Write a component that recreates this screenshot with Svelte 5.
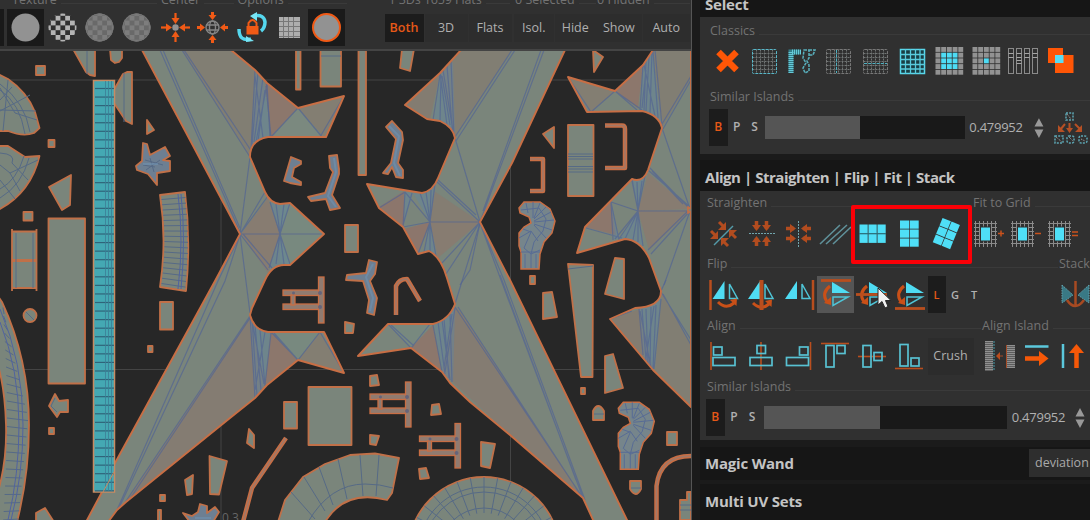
<script>
  const range = (n) => Array.from({ length: n }, (_, i) => i);

  const slateFill = '#7a857b';
  const facets = [
    ['#827c72', '182,50 230,50 255,70 268,84 250,157'],
    ['#8f746a', '265,82 298,108 271,137'],
    ['#7b8980', '298,108 271,137 322,137'],
    ['#857d71', '298,108 344,96 324,137'],
    ['#897a70', '241,234 268,198 280,234 268,273'],
    ['#788980', '280,204 290,203 324,234 290,265 280,262'],
    ['#867a71', '250,317 266,385 230,418 122,507'],
    ['#8f746a', '271,332 298,360 265,385'],
    ['#788980', '271,332 324,332 298,360'],
    ['#857d71', '320,332 344,373 298,360'],
    ['#827c72', '460,50 512,50 455,137 440,73'],
    ['#857a70', '440,73 405,105 430,120'],
    ['#8f736a', '379,207 404,191 404,227'],
    ['#8f736a', '404,229 430,222 418,254'],
    ['#867b71', '434,191 480,222 430,222'],
    ['#897a70', '430,222 480,222 438,258'],
    ['#788980', '388,324 433,324 411,348'],
    ['#8f746a', '411,348 433,325 442,372'],
    ['#867a71', '455,307 460,311 583,498 510,435 442,372'],
    ['#827c72', '653,50 691,50 691,78 662,128'],
    ['#8f746a', '615,91 643,65 638,108'],
    ['#857d71', '568,77 615,91 591,112'],
    ['#897a70', '648,173 691,209 638,211'],
    ['#8f746a', '585,227 611,202 616,235'],
    ['#897a70', '638,211 691,210 649,250'],
    ['#857a70', '610,319 640,309 653,370'],
    ['#827c72', '662,293 691,345 691,407 655,370']
  ];
  const islands = [
    'M142 50L240 234L215 281L115 463L102 492L86 522H108L117 510L126 502L230 418L255 398L267 385L298 360L344 373L324 332H268Q254 330 250 315L252 308L265 280Q272 265 284 265L290 265L324 234L290 203L280 204Q270 203 265 192L250 157Q250 140 268 137H326L344 96L298 108L267 83L255 70L231 50Z',
    'M461 50L440 73L405 105L427 119L440 121Q453 127 455 138L438 178Q433 191 422 193L367 184L379 208L403 227L418 254L429 251Q441 257 447 278L455 304Q449 320 433 324H388L358 356L411 348L442 372L450 383L470 402L510 435L583 498L594 522H628L510 280L480 222L512 163L565 50Z',
    'M653 50L643 65L615 91L568 77L587 112L642 111Q659 115 662 128L648 170Q643 183 632 179L585 227L577 253L625 239Q640 240 649 258L661 291Q661 307 635 308L610 319L653 370L691 407V50Z'
  ];
  const wires = [
    'M160 50L240 232M163 50L240 228M182 50L250 157M184 50L252 152',
    'M240 235L225 281L119 508M240 235L218 281L117 510M250 316L122 507M254 312L128 502',
    'M255 70L251 150M258 72L252 145M263 78L254 142M267 84L256 142M255 76L263 138M266 86L271 137M265 90L258 141',
    'M298 108L271 137M298 108L322 137M344 96L320 137M267 84L270 137',
    'M240 234H324M240 234L250 157M240 234L268 196M240 234L265 192M240 234L268 270M240 234L250 313M243 234L272 268',
    'M280 234L270 202M280 234L276 204M280 234L284 204M280 234L290 203M280 234L269 268M280 234L276 264M280 234L284 264M280 234L290 264',
    'M250 315L255 398M252 318L257 396M255 325L261 390M260 330L265 386M265 332L255 390M271 333L265 385M251 315L264 384',
    'M271 332L298 360L320 332L344 373M298 360L274 333',
    'M512 50L455 137M515 50L456 141M544 50L480 222M541 50L483 211M455 138L480 222M440 73L447 125M443 70L453 131M447 66L453 137M451 60L454 138M440 75L433 120M441 75L440 121M442 76L450 125',
    'M379 208L405 192L430 222L480 222M403 227L430 222L418 254M405 192L403 227M412 193L403 225M420 193L430 222M426 192L430 222M431 190L430 222M435 184L430 222M436 181L480 222M438 180L476 215M430 222L424 252M430 222L430 251M430 222L436 256M480 222L442 263M480 222L446 274M480 223L455 304',
    'M388 324L411 348L430 324M391 325L414 346M433 325L442 372M438 322L445 374M444 319L449 378M450 314L452 382M455 308L445 372M452 314L444 368M442 320L450 380',
    'M455 307L583 498M458 307L580 494M480 223L501 280L583 498M480 223L504 280L585 500M500 275L576 480M480 223L470 270L460 285',
    'M568 77L591 112L615 91L637 110M615 91L642 110M643 65L640 110M646 61L644 111M649 56L646 111M652 51L650 113M653 51L658 118M655 50L662 126M644 65L655 116M646 70L642 108M691 76L662 124M691 80L663 129',
    'M662 128L690 209M648 170L690 207M650 168L690 209L648 250M651 254L690 211M652 171L683 204M632 179L638 211H690L664 285M611 202L638 211L615 239M611 202L613 240M611 202L619 240M632 181L638 211M637 182L638 211M642 181L638 211M645 176L638 211M586 228L622 238M638 211L619 239M638 211L625 239M638 211L633 240M638 211L638 242M638 211L643 246',
    'M639 309L643 355M642 309L646 360M646 309L648 365M651 307L650 368M656 305L653 369M661 299L654 369M640 311L651 368M654 306L646 358M661 292L691 340M663 294L691 345M661 291L666 280M610 319L632 311'
  ];
  const washes = [
    '255,72 265,84 270,136 251,150', '270,203 290,203 280,234', '280,234 290,265 269,268',
    '250,317 270,333 265,385 255,397', '440,75 453,62 455,135 434,120', '405,192 413,193 404,224',
    '413,193 436,184 430,222', '430,222 436,256 424,252', '434,324 455,309 453,382 442,372',
    '643,65 653,52 661,125 640,110', '632,180 645,177 638,211', '638,211 643,246 619,239',
    '611,202 619,238 614,240', '639,309 661,295 654,369 644,357'
  ];
  const pieces = [
    '36,66 45,66 45,75 36,75', '48.500,140 54.500,140 54.500,147 48.500,147', '23.500,212 32.500,212 32.500,220.500 23.500,220.500',
    '148,346 152.500,346 152.500,352 148,352', '49,428 54,428 54,434 49,434', '160,495 165,495 165,501 160,501',
    '73,49 95,49 95,76 90,75 86,72', '110,49 122,49 122,58 119,62 115,63 111,60', '132,72 132,124 126,121 112,100 111,95 123,74 127,72',
    '147,120 154,130 147,134', '49,187 71,175 70,205 62,210', '48.500,218.500 85,218.500 85,383.500 48.500,383.500',
    '160,302 173,302 173,329.500 160,329.500', '49,406 55,394 59,401 68,400 68,412 60,412 57,417', '36,522 36,513 45,508 54,522',
    '209.500,456 227,461 219,494.500 210,494', '185,480 193,475 192,494 187,495', '158,510 161,510 161,522 158,522',
    '296,49 300.500,49 300.500,89.500 296,89.500', '320.500,49 341,49 341,86.500 320.500,86.500', '358.500,49 366,49 366,175 358.500,175',
    '402,49 414,49 410,71 400,68', '345,225 358,225 358,252 345,252', '308.500,387 351.500,387 351.500,445 308.500,445',
    '284,402 297,402 297,428.500 284,428.500', '249,429 254,435 254,448 247,443',
    '345,322 354,324 353,333 345,333', '370,376 377,375 379,385 370,386', '370,435 379,436 376,445 370,444', '432,405 439,404 441,414 431,415', '419,469 426,468 429,478 420,479',
    '593,50 603,57 594,72', '543,134 554,127 554,148', '568,125 593.500,125 593.500,196 568,196',
    '568,264 593,265 592.500,377 581,377', '615,258 624,259 624,299 605,294', '543,293 552,292 557,317 543,319', '530,276 535,276 535,284 530,284',
    '605,356 613,354 623,388 605,393', '581,388 585,388 585,394 581,394', '667,432 677,432 677,445 667,445', '481,442 495,444 490,468 481,466'
  ];
  const limbs = [
    '291,157 301,161 301,164 294,168 292,177 301,182 301,185 290,183 284,181',
    '329,156 337,155 339,169 339,174 332,195 340,208 330,210 326,199 311,201 308,197 325,193 333,172 330,168',
    '386,127 392,121 402,132 403,140 398,163 403,170 403,178 396,177 392,167 388,174 383,173 391,163 396,139',
    '347,275 366,273 369,260 377,262 375,274 370,281 377,298 374,315 367,313 369,300 363,281 346,280',
    '143,143 147,144 150,155 165,147 170,156 163,160 170,161 170,171 157,173 157,185 148,174 137,170 136,166 142,161',
    '183,513 192,516 198,512 200,504 207,506 207,513 215,507 219,512 213,522 190,522'
  ];
  const worm = 'M519 208L524 202L540 202L550 209L555 221L552 233L544 242L540 254L539 269H521V252L519 246V233L524 227L531 223L529 217L520 213Z';
  const wormMesh = 'M521 210L539 208L546 219L543 231L534 242L531 254V268M526 203L528 213M533 202V218M540 203L534 218M546 207L534 219M551 212L534 221M554 220L534 222M552 230L534 224M546 238L534 225M519 238L531 231L538 241M521 252H540M525 254V268M536 254V268M523 229L531 232L524 248L531 254L540 250';
  const hFrames = [[283, 290, 277, 323], [370, 394, 382, 427], [419.500, 436, 423.500, 468]];
  const rods = 'M396 315V286Q399 279 407 279L420 301M530 159H543V191H530M605 125.500H622Q625 125.500 625 129V168H605M286 438L252 488L243 522M656.500 522V486Q660 456 691 456';
  const archRibs = [[319, 467, 333, 505], [338, 459, 347, 499], [360, 455, 363, 496], [379, 455, 376, 496], [304, 477, 325, 511], [291, 492, 315, 519]];
  const discRibs = range(17).map((i) => {
    const a = Math.PI * (1.04 + i * 0.0575);
    return [484 + 40 * Math.cos(a), 553 + 40 * Math.sin(a), 484 + 76 * Math.cos(a), 553 + 76 * Math.sin(a)];
  });

  const classics = ['cross', 'dots', 'corner', 'dotsV', 'dotsH', 'mesh', 'grow', 'shrink', 'bars', 'overlap'];
  const straighten = ['stDiag', 'stH', 'stV', 'stLines', 'gridH', 'gridV', 'gridR'];
  const fits = ['+', '-', '='];
  const flips = [0, 1, 2, 3, 4, 5];
</script>

{#snippet tri()}
  <path d="M16 7V25H4Z" fill="#4fdcf3" /><path d="M21 10V24.500H29Z" fill="none" stroke="#4fc4d6" stroke-width="1.500" />
{/snippet}

{#snippet curl()}
  <path d="M10 27Q18 35 26 28" fill="none" stroke="#c95018" stroke-width="3" /><path d="M22 25L29 23.500L28.500 31Z" fill="#c95018" />
{/snippet}

{#snippet icon(name)}
  <svg class="icon" viewBox="0 0 37 37">
    {#if name === 'cross'}
      <path d="M9.500 9L27.500 27M27.500 9L9.500 27" stroke="#ff5606" stroke-width="6.500" />
    {:else if name === 'dots' || name === 'dotsV' || name === 'dotsH'}
      <path d="M6.500 10.500H31M6.500 14.500H31M6.500 18.500H31M6.500 22.500H31M6.500 26.500H31M10.500 6.500V31M14.500 6.500V31M18.500 6.500V31M22.500 6.500V31M26.500 6.500V31" stroke="#707574" stroke-dasharray="2 1" fill="none" />
      <rect x="6.500" y="6.500" width="24" height="24" rx="1" fill="none" stroke={name === 'dots' ? '#58b7c8' : '#777'} stroke-dasharray="3 1" />
      {#if name === 'dotsV'}<path d="M16.500 7V30" stroke="#4eb2c2" stroke-dasharray="3 1.200" />{/if}
      {#if name === 'dotsH'}<path d="M7 20.500H30" stroke="#4eb2c2" stroke-dasharray="3 1.200" />{/if}
    {:else if name === 'corner'}
      <path d="M8 30V9H17" fill="none" stroke="#347e8a" stroke-width="5" /><path d="M8 30V9H18" fill="none" stroke="#66c9d8" stroke-width="5" stroke-dasharray="1 1" />
      <path d="M21 7H26V15L24 18L26 22V28L22 30L20 25L23 20L20 15ZM26 7L32 7L30 12H26" fill="none" stroke="#58aebb" stroke-width="1.500" stroke-dasharray="3 1" />
    {:else if name === 'mesh'}
      <rect x="6.500" y="6.500" width="24" height="24" fill="#193d43" stroke="#58d7eb" stroke-width="1.500" />
      <path d="M11.500 6V31M16.500 6V31M21.500 6V31M26 6V31M6 11.500H31M6 16.500H31M6 21.500H31M6 26H31" stroke="#58cbdd" stroke-width="1.300" />
    {:else if name === 'grow' || name === 'shrink'}
      {#each range(5) as r}{#each range(5) as c}
        <rect x={4.500 + c * 5.700} y={4 + r * 5.700} width="4.900" height="4.900" fill={(name === 'grow' && r > 0 && r < 4 && c > 0 && c < 4) || (r === 2 && c === 2) ? '#4edcf5' : '#929292'} />
      {/each}{/each}
    {:else if name === 'bars'}
      {#each range(4) as c}
        <rect x={3.500 + c * 8} y="5.500" width="5" height="25" fill="none" stroke="#8a8a8a" />
        <path d="M{3.500 + c * 8} 10.500h5M{3.500 + c * 8} 14.500h5{c === 1 ? 'm-5 3h5m-5 3h5' : ''}" stroke="#a5a5a5" />
      {/each}
    {:else if name === 'overlap'}
      <rect x="6" y="5" width="15" height="15" fill="#ff5606" /><rect x="13" y="12" width="18.500" height="18" fill="#ff5606" /><rect x="13" y="12" width="8.500" height="8" fill="#58ddf4" />
    {:else if name === 'stDiag'}
      <path d="M8 30L27 11" stroke="#549aa8" stroke-width="1.500" />
      <g stroke="#b24c1f" stroke-width="3" fill="none"><path d="M13 7L17 11M5 16L9 20M30 23L26 19M22 31L18 27" /></g>
      <g fill="#b24c1f"><path d="M20 7V15H12ZM12 16V24H4ZM23 15V23L31 15ZM15 23V31L23 23Z" /></g>
    {:else if name === 'stH' || name === 'stV'}
      <g transform={name === 'stV' ? 'rotate(90 18.500 18.500)' : ''}>
        <path d="M6 18.500H32" stroke="#71a5ad" stroke-dasharray="2 1" />
        <path d="M13.500 6V14M23.500 6V14M13.500 31V23M23.500 31V23" stroke="#b24c1f" stroke-width="3.500" />
        <path d="M9 10H18L13.500 16ZM19 10H28L23.500 16ZM9 27H18L13.500 21ZM19 27H28L23.500 21Z" fill="#b24c1f" />
      </g>
    {:else if name === 'stLines'}
      <path d="M3 29L23 10M9 29L30 10M16 29L34 12" fill="none" stroke="#5f9099" stroke-width="1.600" />
    {:else if name === 'gridH'}
      {#each range(2) as r}{#each range(3) as c}<rect x={5.500 + c * 9} y={9.500 + r * 9.600} width="8.200" height="8.800" fill="#4fdff7" />{/each}{/each}
      <path d="M5 18.700H32" stroke="#2b7884" />
    {:else if name === 'gridV' || name === 'gridR'}
      <g transform={name === 'gridR' ? 'rotate(22 18.500 18.500)' : ''}>
        {#each range(3) as r}{#each range(2) as c}<rect x={9 + c * 9.700} y={5.500 + r * 9} width="9" height="8.200" fill="#4fdff7" />{/each}{/each}
      </g>
    {/if}
  </svg>
{/snippet}

{#snippet label(text)}
  <div class="label"><span>{text}</span><i></i></div>
{/snippet}

{#snippet similar(full)}
  <div class="similar" class:full>
    <b class="on">B</b><b>P</b><b>S</b>
    <div class="track"><div class="fill" style:width={full ? '48%' : '47.500%'}></div></div>
    <span class="value">0.479952</span>
    <svg class="spin" viewBox="0 0 10 22"><path d="M5 1L9.500 9.500H.500ZM5 21L9.500 12.500H.500Z" fill="#999" /></svg>
    {#if !full}
      <svg class="tree" viewBox="0 0 36 36"><g fill="none" stroke="#5ca5b2" stroke-width="1.500" stroke-dasharray="2 1.200"><rect x="12" y="3" width="7" height="7" /><rect x="1" y="26" width="8" height="7" /><rect x="13" y="26" width="7" height="7" rx="2" /><rect x="25" y="26" width="8" height="7" rx="2" /></g><path d="M13 4L17 9M2 27L8 32M15 27L19 31M27 29L31 31" stroke="#aaa" stroke-dasharray="1 1" /><path d="M11 14L6 20M15.500 13V21M21 14L26 19" stroke="#b65024" stroke-width="2" /><path d="M4 15V22H11ZM12 18H19L15.500 23ZM28 15V22H21Z" fill="#b65024" /></svg>
    {/if}
  </div>
{/snippet}

<div class="app">
  <main>
    <header>
      <div class="group g1">
        {@render label('Texture')}
        <div class="tools">
          <svg class="icon cut" viewBox="0 0 4 37"><rect width="4" height="37" fill="#191919" /></svg>
          <svg class="icon sel" viewBox="0 0 37 37"><circle cx="18.500" cy="18.500" r="14" fill="#929292" /></svg>
          {#each [0, 1, 2] as k}
            <svg class="icon" viewBox="0 0 37 37">
              <clipPath id="ball{k}"><circle cx="18.500" cy="18.500" r="14" /></clipPath>
              <g clip-path="url(#ball{k})"><rect width="37" height="37" fill={k ? '#696969' : '#303030'} />
                {#each range(7) as r}{#each range(7) as c}{#if (r + c) % 2}<rect x={2 + c * 4.800} y={2 + r * 4.800} width="4.800" height="4.800" fill={k ? '#7d7d7d' : '#b4b4b4'} />{/if}{/each}{/each}
              </g>
              {#if k}<circle cx="18.500" cy="18.500" r="13.500" fill="none" stroke="#777" />{/if}
            </svg>
          {/each}
        </div>
      </div>
      <div class="group g2">
        {@render label('Center')}
        <div class="tools">
          {#each [0, 1] as k}
            <svg class="icon" viewBox="0 0 37 37">
              {#if k}<g fill="none" stroke="#858585" stroke-width="1.400"><circle cx="18.500" cy="18.500" r="6.500" /><ellipse cx="18.500" cy="18.500" rx="3" ry="6.500" /><path d="M12 16H25M12 21H25" /></g>{:else}<circle cx="18.500" cy="18.500" r="3.200" fill="#929292" />{/if}
              {#each [0, 90, 180, 270] as a}<g transform="rotate({a} 18.500 18.500)">{#if k}<path d="M18.500 3V6" stroke="#f05a16" stroke-width="3" /><path d="M14.500 6H22.500L18.500 11Z" fill="#f05a16" />{:else}<path d="M18.500 4V10" stroke="#f05a16" stroke-width="2.200" /><path d="M14.500 9H22.500L18.500 15Z" fill="#f05a16" />{/if}</g>{/each}
            </svg>
          {/each}
        </div>
      </div>
      <div class="group g3">
        {@render label('Options')}
        <div class="tools">
          <svg class="icon" viewBox="0 0 37 37"><path d="M20 7Q30 5 31 13Q31 19 27 22M17 30Q5 33 5 20" fill="none" stroke="#55d7ee" stroke-width="3.500" /><path d="M16 7L23 3V12ZM20 32L12 27V33Z" fill="#77e5f5" /><rect x="12.500" y="17" width="12" height="8.500" fill="#f05a16" /><path d="M14.500 18V14Q18.500 8 22.500 14V18" fill="none" stroke="#f05a16" stroke-width="2" /></svg>
          <svg class="icon" viewBox="0 0 37 37"><rect x="8" y="8" width="21" height="21" fill="#adadad" /><path d="M12.500 8V29M17.500 8V29M22.500 8V29M8 12.500H29M8 17.500H29M8 22.500H29M8 27.500H29" stroke="#777" /></svg>
          <svg class="icon sel" viewBox="0 0 37 37"><circle cx="18.500" cy="18.500" r="13.500" fill="#929292" stroke="#f05a16" stroke-width="2" /></svg>
        </div>
      </div>
      <div class="group g4">{@render label('1 3Ds 1659 Flats')}<div class="words"><b class="on">Both</b><span>3D</span><span>Flats</span></div></div>
      <div class="group g5">{@render label('0 Selected')}<div class="words"><span>Isol.</span><span>Hide</span></div></div>
      <div class="group g6">{@render label('0 Hidden')}<div class="words"><span>Show</span><span>Auto</span></div></div>
    </header>

    <svg class="canvas" viewBox="0 51 691 469">
      <path d="M0 80H691M0 369.500H691M221 51V520M510.500 51V520" stroke="#444" />
      {#each islands as d, i}
        <clipPath id="isl{i}"><path {d} /></clipPath>
        <path {d} fill={slateFill} />
      {/each}
      {#each islands as d, i}
        <g clip-path="url(#isl{i})">
          {#each facets as [fill, points]}<polygon {points} {fill} fill-opacity=".85" />{/each}
          {#each washes as points}<polygon {points} fill="#5c87a8" fill-opacity=".38" />{/each}
          {#each wires as w}<path d={w} fill="none" stroke="#566791" stroke-opacity=".75" stroke-width="1.200" />{/each}
        </g>
      {/each}
      <g fill="none" stroke="#c86e44" stroke-width="1.900" stroke-linejoin="round">{#each islands as d}<path {d} />{/each}</g>

      <g fill={slateFill} stroke="#c07048" stroke-width="1.800" stroke-linejoin="round">
        {#each pieces as points}<polygon {points} />{/each}
        <g fill="#6d7f92">{#each limbs as points}<polygon {points} />{/each}</g>
        <path d="M-2 74L8 79Q27 92 35 112L39.500 128L34 133Q23 137 8 131H-2ZM-2 146H8L25 157L39.500 156Q31 192 0 209H-2Z" />
        <path d="M160 195L185 192Q191 240 186 291L160 287Q167 240 160 195Z" />
        <path d="M12 229V291M36.500 229V291M12 231.500H36.500V288H12Z" /><path d="M12 260.500H36.500" stroke-width="3" />
        <circle cx="30" cy="315.500" r="6.500" />
        <path d="M-2 296L2 302Q29 360 29 425Q29 475 17 522H-2V492Q7 460 6 425Q5 390 -2 365Z" />
        <path d="M278 522L285 500L303 477L325 464L350 455L375 453.500L399 458L392 493L387 500Q345 489 325 522Z" />
        <circle cx="484" cy="553" r="76" />
        <path d="M593 420V411Q598 401 604 411V420ZM630 481H641V489Q636 499 630 489Z" />
        <path d="M691 492H687V500H680V520H691Z" />
        <path d="M691 209L688 207V213L691 211" />
      </g>
      {#each hFrames as [x, y, t, b]}
        <g fill="#907b70" stroke="#c86e44" stroke-width="1.300"><rect {x} {y} width="37" height="5.500" /><rect {x} y={y + 14} width="37" height="5.500" /><rect x={x + 8} y={y + 5} width="4" height="10" /><rect x={x + 35.500} y={t} width="5.500" height={b - t} /></g>
        <g fill="#65647a"><circle cx={x + 10.500} cy={y + 3} r="1.500" /><circle cx={x + 37} cy={y + 3} r="2" /><circle cx={x + 37} cy={y + 17} r="2" /></g>
      {/each}
      <g fill="none" stroke-linejoin="round">
        <path d={rods} stroke="#c86e44" stroke-width="4.500" />
        <path d={rods} stroke="#a17867" stroke-width="1.500" />
      </g>
      {#each [[0, 0], [99.300, 200.300]] as [dx, dy]}
        <g transform="translate({dx} {dy})"><path d={worm} fill="#76858b" stroke="#c86e44" stroke-width="1.500" /><path d={wormMesh} fill="none" stroke="#586c95" /></g>
      {/each}
      <g fill="none" stroke="#566a86" stroke-width="1">
        {#each range(17) as i}<path d="M{161.500 + Math.sin((i / 16) * 3.140) * 3} {199.500 + i * 5.250}L{185.500 + Math.sin((i / 16) * 3.140) * 2.500} {197.500 + i * 5.600}" />{/each}
        <path d="M178 194Q184 240 178 289M181 194Q186 240 181 289" stroke="#5163a0" />
        {#each range(26) as i}<path d="M{3 + Math.sin((i / 25) * 3.100) * 4} {350 + (i - 5) * 8.500}L{i < 13 ? 4 + i * 1.900 : 28 - (i - 13) * .8} {314 + i * 8.200}" />{/each}
        <path d="M0 309Q23 362 23 425Q23 475 11 520M0 322Q19 370 19 425Q19 475 8 520" stroke="#5163a0" />
        {#each archRibs as [a, b, c, d]}<path d="M{a} {b}L{c} {d}" />{/each}
        <path d="M308 522Q330 484 365 484Q380 484 393 488" />
        {#each discRibs as [a, b, c, d]}<path d="M{a} {b}L{c} {d}" />{/each}
        <circle cx="484" cy="553" r="66" /><circle cx="484" cy="553" r="61" /><circle cx="484" cy="553" r="45" />
        <path d="M0 84Q25 102 30 132M0 90Q20 103 25 134M0 111L30 95M0 110L36 111M8 80L3 131M0 88L15 113L37 120M0 100L12 87M0 153Q16 154 12 163L28 180M0 198Q22 185 29 158M0 189Q17 180 24 156M0 165L10 173L20 191M10 173L38 160M0 180L15 199" />
        <path d="M568 154H593M568 156.500H593M568 159H593M568 166.500H593M568 169H593M568 172H593M321 56H341M87 51V74M124 73V122M26 312L34 320M594 414H604M631 488H641M680 505H691M680 510H691M16 233V288M33 233V288M55 398L51 406L57 412M145 160L163 165M146 170L160 160M150 158L154 172M143 165L155 167M568 269L593 266" />
      </g>
      <g stroke="#6f91b0" stroke-width="2" fill="none" opacity=".6"><path d="M334 158L336 172L328 196L336 207M389 126L399 136L394 163L400 176M373 264L366 277L373 298L370 311M143 164H158M195 518H211" /></g>

      <rect x="93.500" y="80.500" width="21" height="411.500" fill="#44a8b3" stroke="#c88a62" stroke-width="1.500" />
      {#each range(48) as i}<path d="M95 {88.500 + i * 8.560}H114" stroke="#2f6479" stroke-width="1.200" />{/each}
      <path d="M105.500 81V491M108.500 81V491M111.500 81V491" stroke="#3b7e96" stroke-width=".8" />
      <path d="M103 492L114 472" stroke="#c88a62" />
      <text x="222" y="522" fill="#666" font-family="Open Sans" font-size="12">0.3</text>
    </svg>
  </main>

  <aside>
    <h2 class="select">Select</h2>
    <section class="box first">
      {@render label('Classics')}
      <div class="tools">{#each classics as n}{@render icon(n)}{/each}</div>
      <div class="space"></div>
      {@render label('Similar Islands')}
      {@render similar(false)}
    </section>

    <h2 class="align">Align | Straighten | Flip | Fit | Stack</h2>
    <section class="box">
      <div class="row">
        <div class="group straight">{@render label('Straighten')}
          <div class="tools">{#each straighten as n}{@render icon(n)}{/each}</div>
          <div class="mark"></div>
        </div>
        <div class="group">{@render label('Fit to Grid')}
          <div class="tools fit">
            {#each fits as f}
              <svg class="icon" viewBox="0 0 37 37"><path d="M6.500 6V32M10.500 6V32M14.500 6V32M18.500 6V32M22.500 6V32M26.500 6V32M5 8.500H28M5 12.500H28M5 16.500H28M5 20.500H28M5 24.500H28M5 28.500H28" stroke="#8b8b8b" /><rect x="11.500" y="12" width="10" height="14" fill="#4fdff7" stroke="#303030" />
                <path d={f === '+' ? 'M29 18.500h6M32 15.500v6' : f === '-' ? 'M29 18.500h6' : 'M29 17h6M29 20.500h6'} stroke="#c9521c" stroke-width="1.500" /></svg>
            {/each}
          </div>
        </div>
      </div>
      <div class="row">
        <div class="group flip">{@render label('Flip')}
          <div class="tools">
            {#each flips as k}
              <svg class="icon" class:hover={k === 3} viewBox="0 0 37 37">
                {#if k < 3}
                  <g transform="translate({k === 0 ? 2.500 : 1} -2)">{@render tri()}</g>
                  {#if k < 2}<g transform={k ? '' : 'translate(2 -1)'}>{@render curl()}</g>{/if}
                  <path d={['M4.500 4V34', 'M18.500 4V34', 'M33 4V34'][k]} stroke="#b94e1e" stroke-width={k === 1 ? 4 : 2.500} />
                {:else}
                  <path d="M15 6V17H33Z" fill="#4fdcf3" /><path d="M16 21H31L16 29.500Z" fill="none" stroke="#4fc4d6" stroke-width="1.500" />
                  <path d="M13 10Q4 17 10 26" fill="none" stroke="#c95018" stroke-width="3" /><path d="M7 27L14 21V29Z" fill="#c95018" />
                  <path d={['M4 4.500H34', 'M2 18.500H33', 'M4 32.500H34'][k - 3]} stroke="#b94e1e" stroke-width="2.800" />
                {/if}
              </svg>
            {/each}
            <div class="modes"><b class="on">L</b><b>G</b><b>T</b></div>
          </div>
        </div>
        <div class="group">{@render label('Stack')}
          <svg class="icon stack" viewBox="0 0 37 37"><path d="M4 9V27L15 19ZM31 9V27L20 19Z" fill="#397985" stroke="#62a1ac" stroke-dasharray="1.500 1" /><path d="M17.500 5V29M9 24Q17 36 26 24" fill="none" stroke="#a74a22" stroke-width="2.500" /></svg>
        </div>
      </div>
      <div class="row">
        <div class="group al">{@render label('Align')}
          <div class="tools">
            {#each flips as k}
              <svg class="icon" viewBox="0 0 37 37">
                <path d={['M5 4V32', 'M18 4V32', 'M30.500 4V32', 'M4 5.500H32', 'M4 18.500H32', 'M4 30.500H32'][k]} stroke="#b94e1e" stroke-width="1.600" />
                <g fill="none" stroke="#58c1d2" stroke-width="1.700">
                  {#if k < 3}<rect x={[7.500, 14, 19.500][k]} y={k === 1 ? 7.500 : 9} width="8.500" height="8" /><rect x={[7, 7, 6.500][k]} y="19.500" width="22" height="8" />
                  {:else}<rect x={9} y={[7.500, 7.500, 6.500][k - 3]} width="8" height="21.500" /><rect x={20} y={[7.500, 14.500, 20][k - 3]} width="8" height="8" />{/if}
                </g>
              </svg>
            {/each}
            <span class="crush">Crush</span>
          </div>
        </div>
        <div class="group">{@render label('Align Island')}
          <div class="tools island">
            <svg class="icon" viewBox="0 0 37 37"><path d="M8 3V33M30 7V30" stroke="#5c5c5c" stroke-width="8" /><path d="M8 3V33M30 7V30" stroke="#909090" stroke-width="8" stroke-dasharray="1 1" /><path d="M13 3V33" stroke="#469aa7" stroke-dasharray="2 1" /><path d="M25.500 7V30M17 18H22" stroke="#a64b25" /><path d="M15 18L19 14V22Z" fill="#b94e1e" /></svg>
            <svg class="icon" viewBox="0 0 37 37"><path d="M7 8.500H30.500" stroke="#5bc8dc" stroke-width="2.500" /><path d="M7 20.500H22" stroke="#f65808" stroke-width="4.500" /><path d="M21 13V28L30.500 20.500Z" fill="#f65808" /></svg>
            <svg class="icon" viewBox="0 0 37 37"><path d="M8 6V30" stroke="#5bc8dc" stroke-width="2.500" /><path d="M21.500 30V14" stroke="#f65808" stroke-width="4.500" /><path d="M14 15H29L21.500 6Z" fill="#f65808" /></svg>
          </div>
        </div>
      </div>
      {@render label('Similar Islands')}
      {@render similar(true)}
    </section>

    <h2 class="wand"><span>Magic Wand</span><span class="dev">deviation</span></h2>
    <h2 class="sets">Multi UV Sets</h2>
  </aside>

  <svg class="cursor" viewBox="0 0 15 23"><path d="M1 1V18L5 14.500L8 21L11 19.500L8.500 13.500H14Z" fill="#f2f2f2" stroke="#292929" /></svg>
</div>

<style>
  :global(body) { background: #1b1b1b; overflow: hidden; }
  .app { display: flex; position: relative; width: 1090px; height: 520px; overflow: hidden; background: #1b1b1b; color: #b0b0b0; font: 500 12.500px 'Open Sans', 'Noto Sans', sans-serif; }
  main { width: 691px; flex: none; border-right: 1px solid #555; box-sizing: content-box; }
  header { display: flex; height: 51px; background: #303030; border-bottom: 2px solid #444; box-sizing: border-box; overflow: hidden; }
  .canvas { display: block; width: 691px; height: 469px; background: #272727; }
  .icon { width: 37px; height: 37px; flex: none; display: block; }
  .tools { display: flex; height: 37px; }
  .group { flex: none; min-width: 0; }
  .label { height: 24px; display: flex; align-items: center; gap: 4px; color: #737373; padding-left: 1.500px; white-space: nowrap; line-height: 24px; }
  .label i { flex: 1; height: 1px; background: #3a3a3a; margin-top: 6px; }
  header .group { margin-top: -9px; }
  header .label { height: 18px; line-height: 18px; }
  .g1 { width: 157px; } .g1 .label { padding-left: 12px; }
  .g2 { width: 76.500px; } .g3 { width: 113px; margin-right: 38px; }
  .g2 .label { padding-left: 4px; } .g3 .label { padding-left: 4px; }
  .g4 { width: 119px; margin-right: 10px; } .g5 { width: 82px; } .g6 { width: 94px; }
  .cut { width: 4px; margin-right: 3px; }
  .sel { background: #1a1a1a; }
  .g4 .label { padding-left: 4px; margin-right: -6px; letter-spacing: -.1px; }
  .words { display: flex; gap: 1px; padding-top: 5px; height: 28px; line-height: 27px; }
  .words > * { flex: 1 1 0; text-align: center; background: #2d2d2d; }
  .g4 .words { gap: 1px; }
  .g4 .words > * { flex: 0 0 43px; }
  .g4 .words .on { flex-basis: 39px; }
  .words .on { font-weight: 600; background: #1c1c1c; }
  .on { color: #e65817; background: #1c1c1c; }

  aside { flex: 1; min-width: 0; padding-left: 8px; overflow: hidden; }
  h2 { margin: 0; padding-left: 5px; font-size: 15px; font-weight: 700; color: #c4c4c4; background: #161616; white-space: nowrap; letter-spacing: -.2px; }
  .select { height: 17px; line-height: 8px; }
  .box { background: #303030; height: 249px; padding-left: 5.500px; overflow: hidden; }
  .box.first { height: 136.500px; padding-top: 2px; box-sizing: border-box; margin-bottom: 6px; padding-left: 8.500px; }
  .align { height: 31.500px; line-height: 34px; letter-spacing: -.47px; }
  .space { height: 5px; }
  .row { display: flex; height: 61.400px; }
  .straight { width: 266px; position: relative; }
  .mark { position: absolute; left: 145px; top: 14px; width: 113px; height: 50.500px; border: 4px solid #fb0007; border-radius: 2px; }
  .flip { width: 352px; }
  .al { width: 275px; }
  .row .group:last-child { flex: 1; }
  .fit { margin-left: -3px; }
  .hover { background: #555; }
  .modes { display: flex; line-height: 37px; font-size: 11px; text-align: center; }
  .modes b, .similar b { font-weight: 600; width: 19px; }
  .modes .on { width: 18px; }
  .crush { width: 46px; line-height: 36px; text-align: center; background: #2c2c2c; }

  .similar { display: flex; align-items: center; height: 37px; line-height: 35px; text-align: center; }
  .similar b { font-size: 12px; width: 18px; height: 37px; }
  .similar .on { width: 19.500px; }
  .track { width: 202px; height: 23px; margin-left: 2px; background: #191919; }
  .full .track { width: 243.500px; margin-left: 2.500px; }
  .fill { height: 100%; background: #555; }
  .value { width: 63px; letter-spacing: -.25px; font-size: 13px; }
  .spin { width: 10px; height: 22px; margin-left: 7px; }
  .full .spin { margin-left: 5px; }
  .tree { width: 36px; height: 36px; margin-left: 10px; flex: none; }
  .wand { display: flex; justify-content: space-between; margin-top: 7px; height: 33px; line-height: 33px; }
  .dev { width: 55px; padding-left: 6px; height: 28px; line-height: 28px; margin-top: 2px; background: #2e2e2e; color: #aaa; font-size: 12.500px; font-weight: 500; letter-spacing: 0; }
  .sets { margin-top: 4px; height: 36px; line-height: 34px; }
  .cursor { position: absolute; left: 877px; top: 287px; width: 15px; height: 23px; }
</style>
